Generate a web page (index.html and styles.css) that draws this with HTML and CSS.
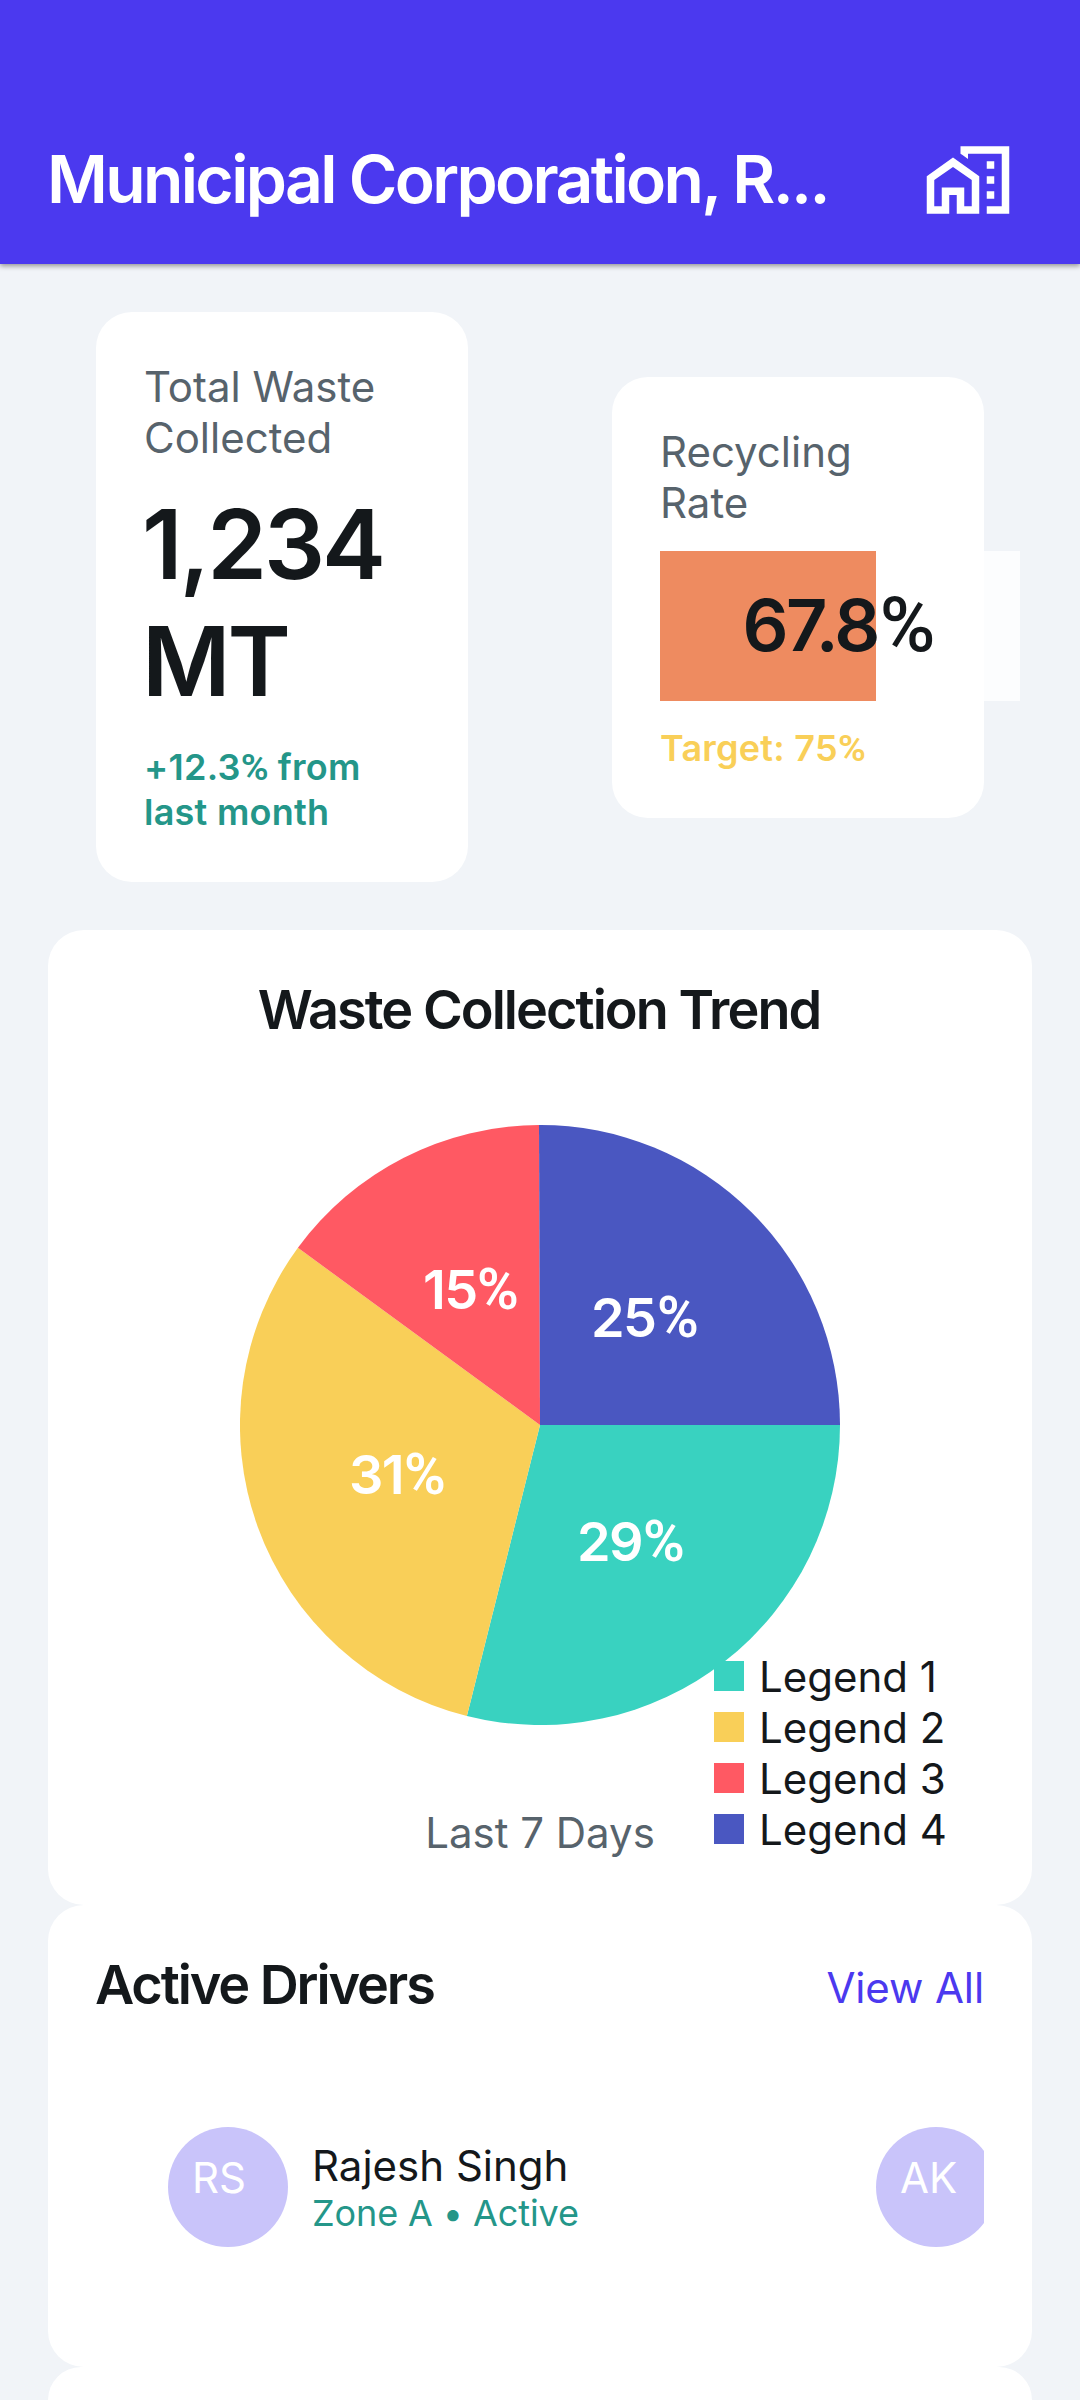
FILE: index.html
```html
<!DOCTYPE html>
<html lang="en">
<head>
<meta charset="utf-8">
<title>Municipal Corporation</title>
<link rel="stylesheet" href="styles.css">
</head>
<body>
<header class="app-bar">
  <h1 class="app-title">Municipal Corporation, R...</h1>
  <svg class="app-icon" viewBox="0 0 24 24" fill="currentColor" aria-hidden="true">
    <path fill-rule="evenodd" d="M1 11v10h6v-5h2v5h6V11L8 6l-7 5zm12 8h-2v-5H5v5H3v-7l5-3.5 5 3.5v7z"/>
    <path d="M17 7h2v2h-2zM17 11h2v2h-2zM17 15h2v2h-2zM10 3v1.97l.53.34L12 6.43V5h9v14h-4v2h6V3z"/>
  </svg>
</header>
<main class="content">
  <section class="stats">
    <article class="card stat">
      <p class="label">Total Waste<br>Collected</p>
      <p class="big-value">1,234<br>MT</p>
      <p class="note note-success">+12.3<span class="pct">%</span> from<br>last month</p>
    </article>
    <article class="card stat">
      <p class="label">Recycling<br>Rate</p>
      <div class="progress">
        <div class="progress-fill" style="width: 60%"></div>
        <span class="progress-text">67.8<span class="pct">%</span></span>
      </div>
      <p class="note note-warning">Target: 75<span class="pct">%</span></p>
    </article>
  </section>
  <section class="card chart-card">
    <h2 class="heading chart-title">Waste Collection Trend</h2>
    <div class="chart">
      <svg class="pie" viewBox="-300 -300 600 600">
        <path fill="#39d2c0" d="M0 0L300 0A300 300 0 0 1 -73.1 291z"/>
        <path fill="#f9cf58" d="M0 0L-73.1 291A300 300 0 0 1 -242.1 -177.2z"/>
        <path fill="#ff5963" d="M0 0L-242.1 -177.2A300 300 0 0 1 -1 -300z"/>
        <path fill="#4a57c1" d="M0 0L-1 -300A300 300 0 0 1 300 0z"/>
        <g class="pie-label">
          <text x="51" y="-88">25<tspan class="pct" x="117">%</tspan></text>
          <text x="-117" y="-116">15<tspan class="pct" x="-63">%</tspan></text>
          <text x="-191" y="69">31<tspan class="pct" x="-136">%</tspan></text>
          <text x="37" y="136">29<tspan class="pct" x="103">%</tspan></text>
        </g>
      </svg>
      <ul class="legend">
        <li class="legend-item"><span class="swatch swatch-teal"></span><span class="legend-text">Legend 1</span></li>
        <li class="legend-item"><span class="swatch swatch-yellow"></span><span class="legend-text">Legend 2</span></li>
        <li class="legend-item"><span class="swatch swatch-red"></span><span class="legend-text">Legend 3</span></li>
        <li class="legend-item"><span class="swatch swatch-blue"></span><span class="legend-text">Legend 4</span></li>
      </ul>
    </div>
    <p class="label period">Last 7 Days</p>
  </section>
  <section class="card drivers">
    <div class="drivers-head">
      <h2 class="heading">Active Drivers</h2>
      <a class="view-all">View All</a>
    </div>
    <div class="driver-list">
      <div class="driver">
        <div class="avatar">RS</div>
        <div class="driver-info">
          <p class="driver-name">Rajesh Singh</p>
          <p class="driver-zone">Zone A • Active</p>
        </div>
      </div>
      <div class="driver">
        <div class="avatar">AK</div>
      </div>
    </div>
  </section>
  <section class="card next-card"></section>
</main>
</body>
</html>
```
FILE: styles.css
```css
* { box-sizing: border-box; margin: 0; padding: 0; }

body {
  width: 1080px;
  height: 2400px;
  overflow: hidden;
  background: #f1f4f8;
  color: #14181b;
  font-family: Inter, "Liberation Sans", sans-serif;
  font-size: 42px;
  line-height: 51px;
}

.app-bar {
  position: relative;
  display: flex;
  align-items: center;
  justify-content: space-between;
  height: 264px;
  padding: 96px 67.5px 0 47px;
  background: #4b39ef;
  color: #fff;
  box-shadow: 0 2px 5px rgba(0, 0, 0, .4);
}
.app-title { margin-top: -2px; font-size: 66px; line-height: 80px; font-weight: 600; letter-spacing: -2.65px; white-space: nowrap; }
.app-icon { width: 90px; height: 90px; }

.content { padding: 48px 48px 0; }
.card { background: #fff; border-radius: 36px; padding: 48px; }

/* narrow percent sign */
.pct { font-family: Roboto, Inter, sans-serif; font-size: 1.05em; line-height: 1; letter-spacing: 0; }

.stats { display: flex; justify-content: space-between; align-items: center; padding: 0 48px; margin-bottom: 48px; }
.stat { display: flex; flex-direction: column; gap: 24px; width: 372px; white-space: nowrap; }
.label,
.note,
.legend-text,
.driver-info { padding-top: 1px; margin-bottom: -1px; }
.label { color: #57636c; }
.big-value { margin-left: -2px; font-size: 96px; line-height: 117px; font-weight: 600; letter-spacing: -3px; }
.note { font-size: 36px; line-height: 45px; font-weight: 600; letter-spacing: .25px; }
.note-success { color: #249689; }
.note-warning { color: #f9cf58; }

.progress { position: relative; display: grid; width: 360px; height: 150px; background: rgba(255, 255, 255, .8); }
.progress-fill { grid-area: 1 / 1; background: #ee8b60; }
.progress-text { grid-area: 1 / 1; place-self: center; margin: -2px 2px 0 0; font-size: 72px; line-height: 87px; font-weight: 600; letter-spacing: -2.6px; }
.progress-text .pct { margin-left: 2px; font-weight: 500; }

.heading { margin: -1px 0 1px; font-size: 54px; line-height: 66px; font-weight: 600; letter-spacing: -2px; }
.chart-title { margin-right: 2px; letter-spacing: -1.95px; }
.drivers-head .heading { margin-left: -1px; letter-spacing: -2.1px; }
.chart-card { display: flex; flex-direction: column; align-items: center; gap: 24px; height: 975px; }
.chart { position: relative; width: 888px; height: 714px; padding: 57px 144px; }
.pie { display: block; width: 600px; height: 600px; }
.pie-label { fill: #fff; font-size: 54px; font-weight: 600; letter-spacing: -1.6px; }
.legend { position: absolute; left: 618px; top: 582px; list-style: none; }
.legend-item { display: flex; align-items: center; gap: 15px; white-space: nowrap; }
.swatch { width: 30px; height: 30px; }
.swatch-teal { background: #39d2c0; }
.swatch-yellow { background: #f9cf58; }
.swatch-red { background: #ff5963; }
.swatch-blue { background: #4a57c1; }

.drivers { height: 462px; }
.drivers-head { display: flex; justify-content: space-between; align-items: center; margin-bottom: 24px; }
.view-all { padding-top: 2px; letter-spacing: -.1px; color: #4b39ef; }
.driver-list { display: flex; height: 276px; padding: 84px 0 0 72px; overflow: hidden; }
.driver { flex: none; display: flex; gap: 24px; width: 708px; height: 120px; align-items: center; white-space: nowrap; }
.avatar { width: 120px; height: 120px; padding: 25px 24px 23px; border-radius: 50%; background: #c9c4fa; color: #fff; }
.driver-zone { font-size: 36px; line-height: 45px; letter-spacing: -.1px; color: #249689; }

.next-card { height: 33px; padding: 0; border-radius: 36px 36px 0 0; }
```
